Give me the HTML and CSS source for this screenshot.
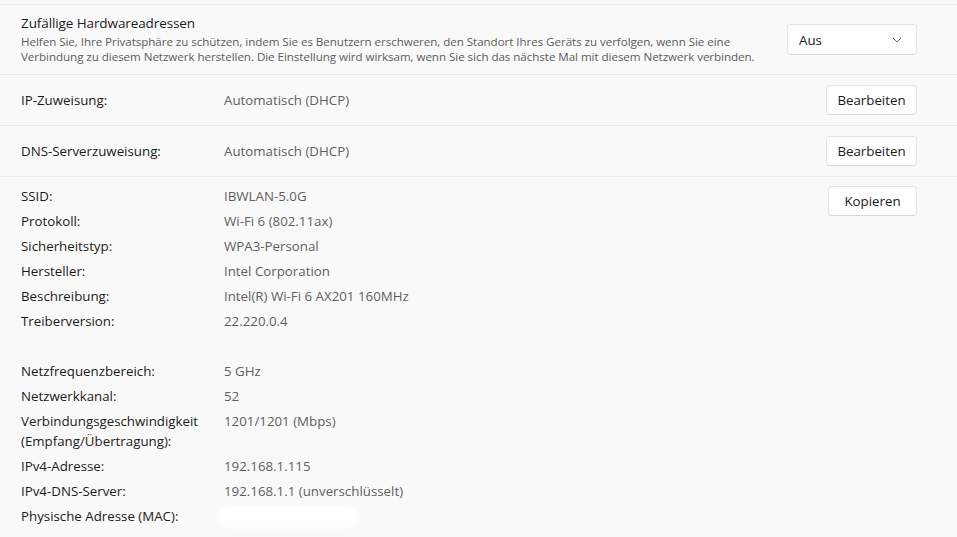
FILE: index.html
```
<!DOCTYPE html>
<html lang="de">
<head>
<meta charset="utf-8">
<title>WLAN-Eigenschaften</title>
<link rel="stylesheet" href="styles.css">
</head>
<body>
<div class="page">
  <div class="prev"></div>
  <section class="row row-random">
    <div class="row-text">
      <div class="title">Zufällige Hardwareadressen</div>
      <div class="desc">Helfen Sie, Ihre Privatsphäre zu schützen, indem Sie es Benutzern erschweren, den Standort Ihres Geräts zu verfolgen, wenn Sie eine<br>Verbindung zu diesem Netzwerk herstellen. Die Einstellung wird wirksam, wenn Sie sich das nächste Mal mit diesem Netzwerk verbinden.</div>
    </div>
    <div class="select">
      <span>Aus</span>
      <svg class="chev" width="10" height="6" viewBox="0 0 10 6"><path d="M1 1 L5 5 L9 1" fill="none" stroke="#6b6b6b" stroke-width="1"/></svg>
    </div>
  </section>
  <section class="row row-simple">
    <div class="label">IP-Zuweisung:</div>
    <div class="value">Automatisch (DHCP)</div>
    <button class="btn">Bearbeiten</button>
  </section>
  <section class="row row-simple">
    <div class="label">DNS-Serverzuweisung:</div>
    <div class="value">Automatisch (DHCP)</div>
    <button class="btn">Bearbeiten</button>
  </section>
  <section class="row row-details">
    <dl class="props">
      <dt>SSID:</dt><dd>IBWLAN-5.0G</dd>
      <dt>Protokoll:</dt><dd>Wi-Fi 6 (802.11ax)</dd>
      <dt>Sicherheitstyp:</dt><dd>WPA3-Personal</dd>
      <dt>Hersteller:</dt><dd>Intel Corporation</dd>
      <dt>Beschreibung:</dt><dd>Intel(R) Wi-Fi 6 AX201 160MHz</dd>
      <dt>Treiberversion:</dt><dd>22.220.0.4</dd>
      <dt class="spacer"></dt><dd class="spacer"></dd>
      <dt>Netzfrequenzbereich:</dt><dd>5 GHz</dd>
      <dt>Netzwerkkanal:</dt><dd>52</dd>
      <dt>Verbindungsgeschwindigkeit<br>(Empfang/Übertragung):</dt><dd>1201/1201 (Mbps)</dd>
      <dt>IPv4-Adresse:</dt><dd>192.168.1.115</dd>
      <dt>IPv4-DNS-Server:</dt><dd>192.168.1.1 (unverschlüsselt)</dd>
      <dt>Physische Adresse (MAC):</dt><dd><span class="redact"></span></dd>
    </dl>
    <button class="btn btn-copy">Kopieren</button>
  </section>
</div>
</body>
</html>
```
FILE: styles.css
```
html, body {
  margin: 0;
  padding: 0;
  background: #f9f9f9;
}
body {
  font-family: "Segoe UI", "Open Sans", "Noto Sans", sans-serif;
  color: #1b1b1b;
  width: 957px;
  height: 537px;
  overflow: hidden;
}
.page {
  display: flex;
  flex-direction: column;
}
.prev {
  height: 4px;
  border-bottom: 1px solid #ebebeb;
}
.row {
  display: flex;
  align-items: center;
  padding: 0 40px 0 21px;
  border-bottom: 1px solid #ebebeb;
}
.row-random {
  height: 69px;
  justify-content: space-between;
}
.row-text {
  display: flex;
  flex-direction: column;
  gap: 2px;
  align-self: flex-start;
  padding-top: 9px;
}
.title {
  font-size: 13.5px;
  line-height: 18px;
  letter-spacing: -0.1px;
}
.desc {
  font-size: 11.6px;
  line-height: 15px;
  color: #5c5c5c;
  white-space: nowrap;
  letter-spacing: -0.05px;
}
.select {
  width: 130px;
  height: 31px;
  box-sizing: border-box;
  background: #fefefe;
  border: 1px solid #e6e6e6;
  border-bottom-color: #d8d8d8;
  border-radius: 4px;
  display: flex;
  align-items: center;
  justify-content: space-between;
  padding: 0 14px 0 11px;
  font-size: 13.3px;
}
.chev {
  display: block;
}
.row-simple {
  height: 50px;
}
.label {
  width: 203px;
  font-size: 13.3px;
}
.value {
  flex: 1;
  font-size: 13.3px;
  color: #5f5f5f;
}
.btn {
  font-family: inherit;
  font-size: 13.3px;
  color: #1b1b1b;
  background: #fefefe;
  border: 1px solid #e6e6e6;
  border-bottom-color: #d6d6d6;
  border-radius: 4px;
  height: 30px;
  width: 91px;
  padding: 0;
}
.row-details {
  align-items: flex-start;
  padding-top: 9px;
  height: 350px;
  border-bottom: none;
}
.props {
  flex: 1;
  margin: 0;
  display: grid;
  grid-template-columns: 203px 1fr;
  row-gap: 5px;
  font-size: 13.3px;
  line-height: 20px;
}
.props dt {
  margin: 0;
  color: #1b1b1b;
}
.props dd {
  margin: 0;
  color: #5f5f5f;
}
.props .spacer {
  height: 20px;
}
.redact {
  display: block;
  width: 140px;
  height: 22px;
  margin: 0 0 0 -6px;
  background: #ffffff;
  border-radius: 11px;
  filter: blur(2px);
}
.btn-copy {
  width: 89px;
}
```
